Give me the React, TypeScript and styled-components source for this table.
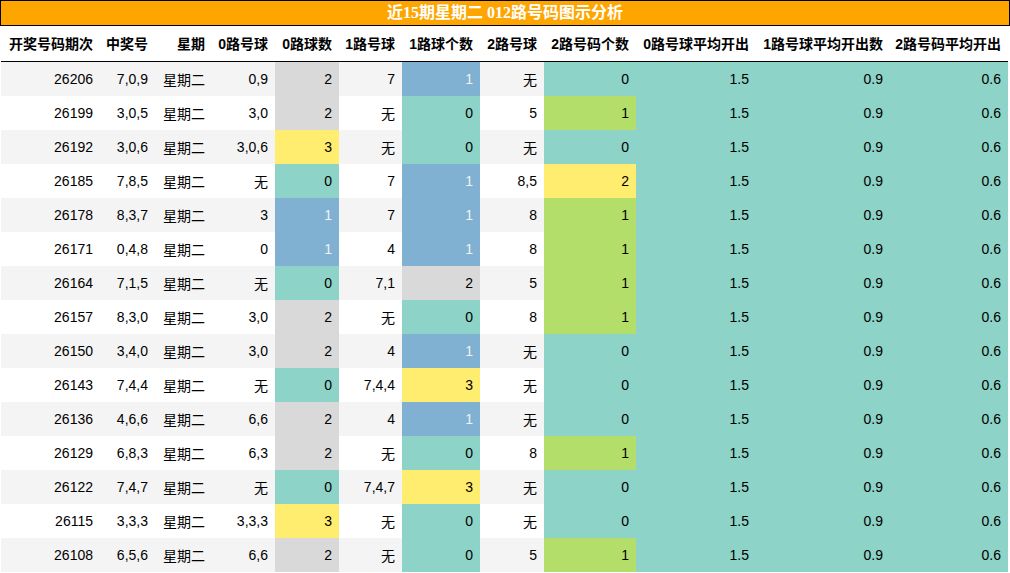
import React from 'react'
import styled, { createGlobalStyle } from 'styled-components';

const GlobalStyle = createGlobalStyle`
  body {
    margin: 0;
    background: #fff;
    font-family: "Liberation Sans", "Noto Sans CJK SC", sans-serif;
  }
`;

const PageDivWrapper = styled.div`
  width: 1010px;
`;

const TitleDiv = styled.div`
  box-sizing: border-box;
  height: 26px;
  border: 1px solid #000;
  background: #ffa500;
  color: #fff;
  font-family: "Liberation Serif", "Noto Sans CJK SC", serif;
  font-weight: bold;
  font-size: 16px;
  line-height: 24px;
  text-align: center;
`;

const StyledTable = styled.table`
  margin-left: 1px;
  width: 1007px;
  table-layout: fixed;
  border-collapse: collapse;
  font-size: 14px;
  color: #000;
`;

const HeadCell = styled.th`
  height: 35px;
  padding: 0 7px 0 0;
  text-align: right;
  font-weight: bold;
  white-space: nowrap;
  border-bottom: 1px solid #000;
  box-sizing: border-box;
`;

const BodyRow = styled.tr<{ $odd: boolean }>`
  background: ${({ $odd }) => ($odd ? '#f4f4f4' : '#fff')};
`;

const colors: Record<string, string> = {
  teal: '#8dd3c7',
  blue: '#80b1d3',
  gray: '#d9d9d9',
  yellow: '#ffed6f',
  green: '#b3de69',
};

const BodyCell = styled.td<{ $tone?: string }>`
  height: 34px;
  padding: 0 7px 0 0;
  text-align: right;
  white-space: nowrap;
  background: ${({ $tone }) => ($tone ? colors[$tone] : 'transparent')};
  color: ${({ $tone }) => ($tone === 'blue' ? '#f2f2f2' : '#000')};
`;

const widths = [99, 55, 57, 63, 64, 63, 78, 64, 92, 120, 134, 118];
const headers = ['开奖号码期次', '中奖号', '星期', '0路号球', '0路球数', '1路号球', '1路球个数', '2路号球', '2路号码个数', '0路号球平均开出', '1路号球平均开出数', '2路号码平均开出'];

const rows = [
  ['26206', '7,0,9', '0,9', '2', '7', '1', '无', '0'],
  ['26199', '3,0,5', '3,0', '2', '无', '0', '5', '1'],
  ['26192', '3,0,6', '3,0,6', '3', '无', '0', '无', '0'],
  ['26185', '7,8,5', '无', '0', '7', '1', '8,5', '2'],
  ['26178', '8,3,7', '3', '1', '7', '1', '8', '1'],
  ['26171', '0,4,8', '0', '1', '4', '1', '8', '1'],
  ['26164', '7,1,5', '无', '0', '7,1', '2', '5', '1'],
  ['26157', '8,3,0', '3,0', '2', '无', '0', '8', '1'],
  ['26150', '3,4,0', '3,0', '2', '4', '1', '无', '0'],
  ['26143', '7,4,4', '无', '0', '7,4,4', '3', '无', '0'],
  ['26136', '4,6,6', '6,6', '2', '4', '1', '无', '0'],
  ['26129', '6,8,3', '6,3', '2', '无', '0', '8', '1'],
  ['26122', '7,4,7', '无', '0', '7,4,7', '3', '无', '0'],
  ['26115', '3,3,3', '3,3,3', '3', '无', '0', '无', '0'],
  ['26108', '6,5,6', '6,6', '2', '无', '0', '5', '1'],
];

const countTone: Record<string, string> = { '0': 'teal', '1': 'blue', '2': 'gray', '3': 'yellow' };
const twoTone: Record<string, string> = { '0': 'teal', '1': 'green', '2': 'yellow' };

const RouteTable = () => {
  return (
    <PageDivWrapper>
      <GlobalStyle />
      <TitleDiv>近15期星期二 012路号码图示分析</TitleDiv>
      <StyledTable>
        <colgroup>
          {widths.map((w, i) => <col key={i} style={{ width: w }} />)}
        </colgroup>
        <thead>
          <tr>
            {headers.map(h => <HeadCell key={h}>{h}</HeadCell>)}
          </tr>
        </thead>
        <tbody>
          {rows.map((r, i) => (
            <BodyRow key={r[0]} $odd={i % 2 === 0}>
              <BodyCell>{r[0]}</BodyCell>
              <BodyCell>{r[1]}</BodyCell>
              <BodyCell>星期二</BodyCell>
              <BodyCell>{r[2]}</BodyCell>
              <BodyCell $tone={countTone[r[3]]}>{r[3]}</BodyCell>
              <BodyCell>{r[4]}</BodyCell>
              <BodyCell $tone={countTone[r[5]]}>{r[5]}</BodyCell>
              <BodyCell>{r[6]}</BodyCell>
              <BodyCell $tone={twoTone[r[7]]}>{r[7]}</BodyCell>
              <BodyCell $tone='teal'>1.5</BodyCell>
              <BodyCell $tone='teal'>0.9</BodyCell>
              <BodyCell $tone='teal'>0.6</BodyCell>
            </BodyRow>
          ))}
        </tbody>
      </StyledTable>
    </PageDivWrapper>
  )
};

export default RouteTable;
